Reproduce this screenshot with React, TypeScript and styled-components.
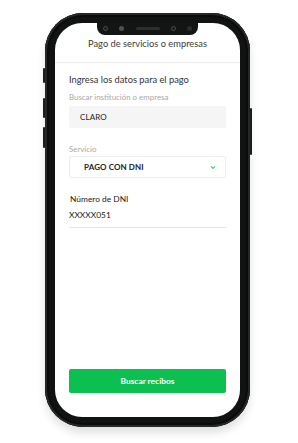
import React from "react"
import styled, { createGlobalStyle } from "styled-components"

const GlobalStyle = createGlobalStyle`
  html, body {
    margin: 0;
    padding: 0;
    background: #ffffff;
    font-family: Lato, "Open Sans", sans-serif;
  }
`

const Page = styled.div`
  width: 298px;
  height: 443px;
  padding: 13px 0 0 45px;
  box-sizing: border-box;
`

const Phone = styled.div`
  position: relative;
  width: 205px;
  height: 414px;
  padding: 10px;
  box-sizing: border-box;
  background: #111312;
  border-radius: 38px;
  box-shadow: inset 0 0 0 2px #262827, inset 0 0 0 4px #0b0b0b, 0 6px 8px rgba(0, 0, 0, 0.12);
`

const SideButton = styled.div<{ $side: "left" | "right"; $top: number; $height: number }>`
  position: absolute;
  top: ${(p) => p.$top}px;
  ${(p) => (p.$side === "left" ? "left: -2px;" : "right: -2px;")}
  width: 2px;
  height: ${(p) => p.$height}px;
  background: #1c1d1d;
  border-radius: 1px;
`

const Screen = styled.div`
  position: relative;
  display: flex;
  flex-direction: column;
  width: 100%;
  height: 100%;
  background: #ffffff;
  border-radius: 27px;
  overflow: hidden;
`

const Notch = styled.div`
  position: absolute;
  top: 0;
  left: 42px;
  width: 101px;
  height: 12px;
  display: flex;
  align-items: center;
  justify-content: space-between;
  padding: 0 6px 1px;
  box-sizing: border-box;
  background: #131414;
  border-radius: 0 0 8px 8px;
`

const Dot = styled.span<{ $ring?: boolean; $tone: string }>`
  width: 5px;
  height: 5px;
  border-radius: 50%;
  box-sizing: border-box;
  background: ${(p) => (p.$ring ? "#1a1b1b" : p.$tone)};
  border: ${(p) => (p.$ring ? `1px solid ${p.$tone}` : "none")};
`

const Speaker = styled.span`
  width: 24px;
  height: 3px;
  border-radius: 2px;
  background: #2c2d2d;
`

const Header = styled.div`
  height: 38px;
  display: flex;
  align-items: center;
  justify-content: center;
  padding-top: 1px;
  border-bottom: 1px solid #ececec;
  font-size: 9.3px;
  color: #3a3a3a;
  flex-shrink: 0;
`

const Form = styled.div`
  flex: 1;
  display: flex;
  flex-direction: column;
  padding: 11px 14px 24px;
`

const Heading = styled.div`
  font-size: 9.3px;
  line-height: 12px;
  color: #333333;
`

const Label = styled.div<{ $gap: number }>`
  margin-top: ${(p) => p.$gap}px;
  font-size: 7.9px;
  line-height: 10px;
  color: #a9a9a9;
`

const Field = styled.div<{ $gap: number; $outlined?: boolean }>`
  margin-top: ${(p) => p.$gap}px;
  height: 22px;
  display: flex;
  align-items: center;
  justify-content: space-between;
  padding: 0 9px 0 ${(p) => (p.$outlined ? 14 : 10)}px;
  box-sizing: border-box;
  background: ${(p) => (p.$outlined ? "#ffffff" : "#f5f5f5")};
  border: 1px solid ${(p) => (p.$outlined ? "#ededed" : "#f5f5f5")};
  border-radius: 2px;
  font-size: 8px;
  color: #222222;
  font-weight: ${(p) => (p.$outlined ? 700 : 400)};
  letter-spacing: 0.1px;
`

const Chevron = styled.svg`
  width: 6px;
  height: 5px;
`

const DniBlock = styled.div`
  margin-top: 15px;
  padding: 0 0 6px 1px;
  border-bottom: 1px solid #e4e4e4;
`

const DniLabel = styled.div`
  font-size: 8.4px;
  line-height: 12px;
  color: #222222;
`

const DniValue = styled.div`
  margin-top: 4px;
  margin-left: -1px;
  font-size: 8.4px;
  line-height: 12px;
  color: #222222;
`

const Spacer = styled.div`
  flex: 1;
`

const PrimaryButton = styled.button`
  height: 24px;
  width: 100%;
  border: none;
  border-radius: 2px;
  background: #0bbf50;
  color: #ffffff;
  font-family: inherit;
  font-size: 8.4px;
  font-weight: 700;
  cursor: pointer;
`

export default function App() {
  return (
    <>
      <GlobalStyle />
      <Page>
        <Phone>
          <SideButton $side="left" $top={55} $height={15} />
          <SideButton $side="left" $top={85} $height={20} />
          <SideButton $side="left" $top={114} $height={21} />
          <SideButton $side="right" $top={95} $height={47} />
          <Screen>
            <Notch>
              <Dot $ring $tone="#4a4b4b" />
              <Dot $tone="#4f5050" />
              <Speaker />
              <Dot $ring $tone="#4a4b4b" />
              <Dot $tone="#2a2b2b" />
            </Notch>
            <Header>Pago de servicios o empresas</Header>
            <Form>
              <Heading>Ingresa los datos para el pago</Heading>
              <Label $gap={6}>Buscar institución o empresa</Label>
              <Field $gap={4}>CLARO</Field>
              <Label $gap={16}>Servicio</Label>
              <Field $gap={2} $outlined>
                PAGO CON DNI
                <Chevron viewBox="0 0 6 5">
                  <path d="M1 1.4 L3 3.4 L5 1.4" fill="none" stroke="#3fd37f" strokeWidth="1.3" />
                </Chevron>
              </Field>
              <DniBlock>
                <DniLabel>Número de DNI</DniLabel>
                <DniValue>XXXXX051</DniValue>
              </DniBlock>
              <Spacer />
              <PrimaryButton>Buscar recibos</PrimaryButton>
            </Form>
          </Screen>
        </Phone>
      </Page>
    </>
  )
}
